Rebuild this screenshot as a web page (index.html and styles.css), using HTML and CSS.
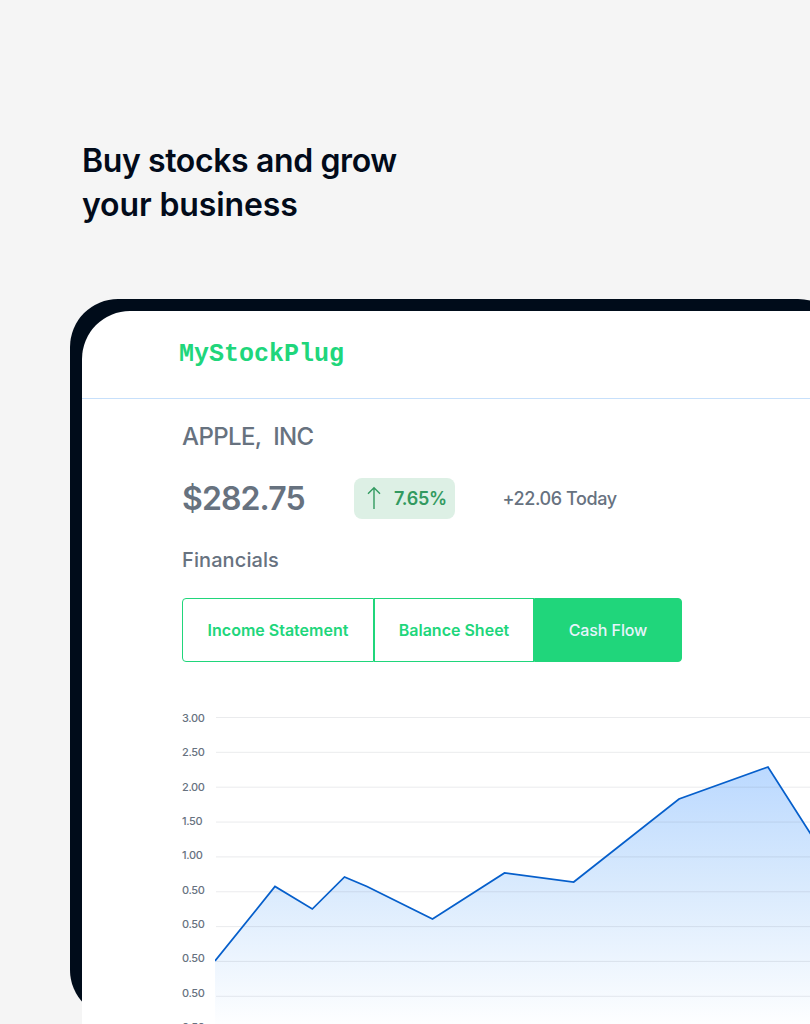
FILE: index.html
```html
<!DOCTYPE html>
<html lang="en">
<head>
<meta charset="utf-8">
<title>MyStockPlug</title>
<link rel="stylesheet" href="styles.css">
</head>
<body>
<main class="page">
  <h1 class="headline"><span class="headline-first">Buy stocks and grow</span><br><span class="headline-second">your business</span></h1>
  <section class="device">
    <div class="screen">
      <header class="topbar"><span class="logo">MyStockPlug</span></header>
      <div class="content">
        <h2 class="company"><span>APPLE,&nbsp; INC</span></h2>
        <div class="quote">
          <strong class="price">$282.75</strong>
          <div class="badge">
            <svg class="arrow" width="14" height="24" viewBox="0 0 14 24" fill="none" stroke="#329a60" stroke-width="1.4"><path d="M7 23V2M1 7.800L7 1.800L13 7.800"/></svg>
            <span class="percent">7.65%</span>
          </div>
          <span class="change">+22.06 Today</span>
        </div>
        <h3 class="subtitle"><span>Financials</span></h3>
        <nav class="tabs">
          <a class="tab tab-income"><span>Income Statement</span></a>
          <a class="tab tab-balance"><span>Balance Sheet</span></a>
          <a class="tab tab-cash"><span>Cash Flow</span></a>
        </nav>
        <div class="chart">
          <div class="axis">
            <span>3.00</span><span>2.50</span><span>2.00</span><span>1.50</span><span>1.00</span><span>0.50</span><span>0.50</span><span>0.50</span><span>0.50</span><span>0.50</span>
          </div>
          <svg class="plot" width="595" height="324" viewBox="215 700 595 324">
            <defs>
              <linearGradient id="area" gradientUnits="userSpaceOnUse" x1="0" y1="767" x2="0" y2="1030">
                <stop offset="0" stop-color="#bbd9ff"/>
                <stop offset="0.45" stop-color="#d9eafd"/>
                <stop offset="1" stop-color="#ffffff"/>
              </linearGradient>
            </defs>
            <path fill="url(#area)" d="M215 961L275 886.500L312.300 909L344.500 877L367 886.500L432.500 919L504.500 873L573.700 882L679 799L768 767L812 836V1030H215Z"/>
            <path stroke="#5a6472" stroke-opacity=".13" d="M216 717.500H810M216 752.350H810M216 787.200H810M216 822.050H810M216 856.900H810M216 891.750H810M216 926.600H810M216 961.450H810M216 996.300H810"/>
            <path fill="none" stroke="#065fcb" stroke-width="1.75" d="M215 961L275 886.500L312.300 909L344.500 877L367 886.500L432.500 919L504.500 873L573.700 882L679 799L768 767L812 836"/>
          </svg>
        </div>
      </div>
    </div>
  </section>
</main>
</body>
</html>
```
FILE: styles.css
```css
* { box-sizing: border-box; }
body { margin: 0; background: #f5f5f5; font-family: Inter, "Liberation Sans", sans-serif; color: #67727f; }
h1, h2, h3 { margin: 0; }
.page { width: 810px; height: 1024px; overflow: hidden; padding-top: 139px; }
.headline { margin-left: 82px; height: 160px; font-size: 32px; line-height: 44px; font-weight: 600; color: #020b1a; white-space: nowrap; }
.headline-first { letter-spacing: -0.38px; }
.headline-second { letter-spacing: -0.12px; }
.device { width: 776px; height: 719px; margin-left: 70px; padding: 12px 0 0 12px; border-radius: 48px; background: #000c1a; }
.screen { width: 900px; height: 760px; background: #fff; border-radius: 48px 0 0 0; }
.topbar { height: 88px; display: flex; align-items: center; padding-left: 97px; border-bottom: 1px solid #c7e0fb; }
.logo { font: bold 25px/30px "Liberation Mono", monospace; color: #20d67b; }
.content { padding: 21px 0 0 100px; }
.company { height: 34px; font-size: 24px; line-height: 34px; font-weight: 500; letter-spacing: -0.6px; white-space: nowrap; }
.quote { display: flex; align-items: center; height: 42px; margin-top: 23px; white-space: nowrap; }
.price { width: 172px; padding-top: 2px; font-size: 32px; line-height: 42px; font-weight: 600; letter-spacing: -0.9px; }
.badge { display: flex; align-items: center; width: 101px; height: 41px; padding-left: 13px; gap: 13px; border-radius: 8px; background: #ddf0e5; color: #329a60; }
.percent { font-size: 18px; font-weight: 600; letter-spacing: -0.3px; }
.change { margin-left: 47.5px; font-size: 18px; font-weight: 500; letter-spacing: -0.4px; }
.subtitle { height: 28px; margin-top: 27px; font-size: 20px; line-height: 28px; font-weight: 500; letter-spacing: 0.1px; }
.tabs { display: flex; width: 500px; height: 64px; margin-top: 24px; }
.tab { display: flex; align-items: center; justify-content: center; border: 1px solid #20d67b; color: #20d67b; font-size: 16px; font-weight: 600; white-space: nowrap; }
.tab-income { width: 192px; border-radius: 4px 0 0 4px; }
.tab-balance { width: 160px; }
.tab-cash { width: 148px; border-radius: 0 4px 4px 0; background: #20d67b; color: #e6f4fb; font-weight: 500; letter-spacing: -0.1px; }
.chart { display: flex; margin-top: 38px; }
.axis { display: flex; flex-direction: column; width: 33px; padding-top: 10px; font-size: 11px; line-height: 16px; gap: 18.350px; font-weight: 500; letter-spacing: -0.35px; }
.plot { display: block; flex: none; }
```
